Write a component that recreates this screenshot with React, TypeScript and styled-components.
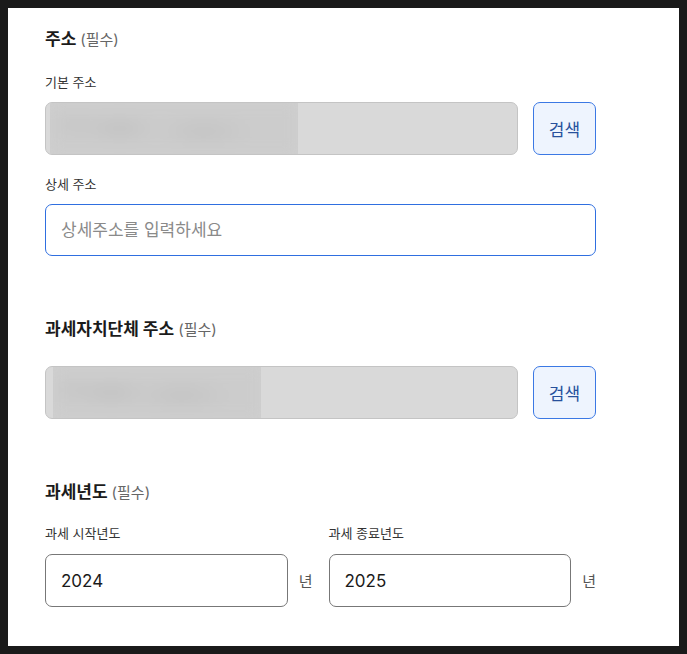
import React from 'react';
import styled, { createGlobalStyle } from 'styled-components';

const Global = createGlobalStyle`
  html, body { padding: 0; background: #1a1a1a; }
  body { margin: 8px; font-family: Inter, "Noto Sans CJK KR", sans-serif; }
  * { box-sizing: border-box; }
`;

const Panel = styled.main`
  background: #ffffff;
  height: calc(100vh - 16px);
  overflow: hidden;
  padding: 19px 0 0 37px;
`;

const Form = styled.div`
  width: 551px;
  display: flex;
  flex-direction: column;
  gap: 61px;
`;

const Section = styled.section<{ $gap: number }>`
  display: flex;
  flex-direction: column;
  gap: ${(p) => p.$gap}px;
`;

const Title = styled.h2`
  margin: 0;
  font-size: 17px;
  line-height: 24px;
  font-weight: 700;
  color: #1b1b1b;
`;

const Required = styled.span`
  font-size: 15px;
  font-weight: 400;
  color: #666666;
  margin-left: 4px;
`;

const Fields = styled.div`
  display: flex;
  flex-direction: column;
  gap: 19px;
`;

const Field = styled.div<{ $gap?: number }>`
  display: flex;
  flex-direction: column;
  gap: ${(p) => p.$gap ?? 10}px;
  min-width: 0;
`;

const Label = styled.label`
  font-size: 13px;
  line-height: 20px;
  color: #333333;
`;

const Row = styled.div`
  display: flex;
  align-items: center;
  gap: 15px;
`;

const ReadonlyBox = styled.div<{ $inset: number }>`
  flex: 1;
  height: 53px;
  border: 1px solid #c4c4c4;
  background: #d9d9d9;
  border-radius: 7px;
  overflow: hidden;
  display: flex;
  padding: 0 0 0 ${(p) => p.$inset}px;
`;

const BlurClip = styled.div<{ $w: number }>`
  width: ${(p) => p.$w}px;
  height: 100%;
  overflow: hidden;
  background: #cfcfcf;
`;

const Blurred = styled.div`
  width: 100%;
  height: 100%;
  filter: blur(7px);
  background:
    radial-gradient(ellipse 40px 14px at 28% 50%, #c2c2c2, transparent),
    radial-gradient(ellipse 50px 16px at 62% 55%, #c4c4c4, transparent),
    radial-gradient(ellipse 30px 12px at 10% 45%, #c6c6c6, transparent),
    #cccccc;
`;

const SearchButton = styled.button`
  width: 63px;
  height: 53px;
  flex: none;
  border: 1px solid #3b78e4;
  background: #eef4fe;
  color: #27509c;
  border-radius: 7px;
  font-family: inherit;
  font-size: 17px;
  padding: 0;
  cursor: pointer;
`;

const TextInput = styled.input`
  width: 100%;
  height: 52px;
  border: 1px solid #2f6fe0;
  border-radius: 7px;
  padding: 0 15px;
  font-family: inherit;
  font-size: 17px;
  color: #1a1a1a;
  outline: none;
  &::placeholder { color: #8a8a8a; }
`;

const YearGrid = styled.div`
  display: grid;
  grid-template-columns: 1fr 1fr;
  gap: 16px;
`;

const YearRow = styled.div`
  display: flex;
  align-items: center;
  gap: 11px;
`;

const YearInput = styled.input`
  flex: 1;
  min-width: 0;
  height: 53px;
  border: 1px solid #777777;
  border-radius: 7px;
  padding: 0 15px;
  font-family: inherit;
  font-size: 17px;
  color: #1a1a1a;
  outline: none;
`;

const Unit = styled.span`
  font-size: 15px;
  color: #555555;
`;

export default function App() {
  return (
    <>
      <Global />
      <Panel>
        <Form>
          <Section $gap={20}>
            <Title>
              주소<Required>(필수)</Required>
            </Title>
            <Fields>
              <Field>
                <Label>기본 주소</Label>
                <Row>
                  <ReadonlyBox $inset={4}>
                    <BlurClip $w={248}>
                      <Blurred />
                    </BlurClip>
                  </ReadonlyBox>
                  <SearchButton>검색</SearchButton>
                </Row>
              </Field>
              <Field>
                <Label>상세 주소</Label>
                <TextInput placeholder="상세주소를 입력하세요" autoFocus />
              </Field>
            </Fields>
          </Section>

          <Section $gap={24}>
            <Title>
              과세자치단체 주소<Required>(필수)</Required>
            </Title>
            <Row>
              <ReadonlyBox $inset={7}>
                <BlurClip $w={208}>
                  <Blurred />
                </BlurClip>
              </ReadonlyBox>
              <SearchButton>검색</SearchButton>
            </Row>
          </Section>

          <Section $gap={18}>
            <Title>
              과세년도<Required>(필수)</Required>
            </Title>
            <YearGrid>
              <Field $gap={11}>
                <Label>과세 시작년도</Label>
                <YearRow>
                  <YearInput defaultValue="2024" />
                  <Unit>년</Unit>
                </YearRow>
              </Field>
              <Field $gap={11}>
                <Label>과세 종료년도</Label>
                <YearRow>
                  <YearInput defaultValue="2025" />
                  <Unit>년</Unit>
                </YearRow>
              </Field>
            </YearGrid>
          </Section>
        </Form>
      </Panel>
    </>
  );
}
